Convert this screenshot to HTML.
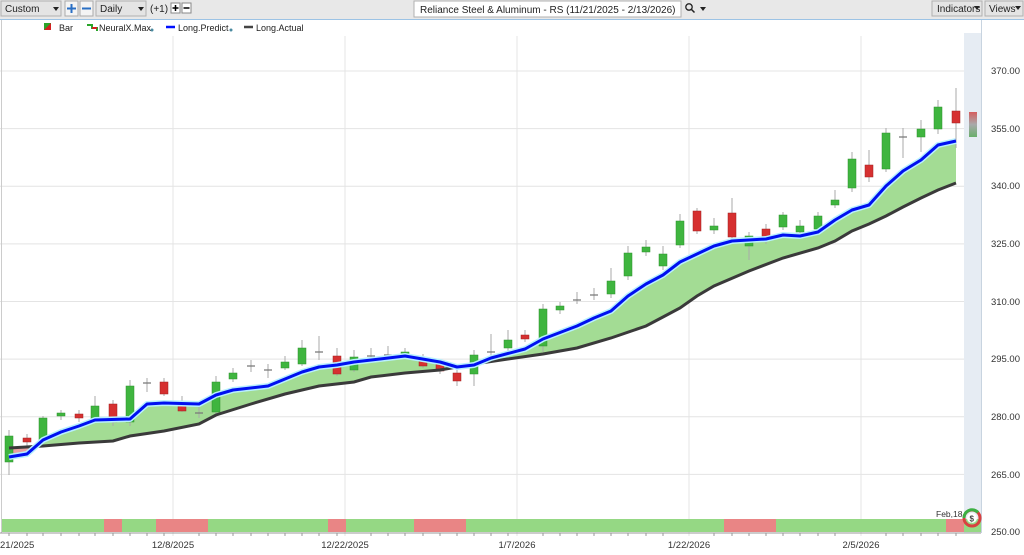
<!DOCTYPE html>
<html><head><meta charset="utf-8"><style>
body{margin:0;width:1024px;height:555px;overflow:hidden;background:#fff;font-family:"Liberation Sans",sans-serif;}
svg{display:block}
</style></head><body>
<svg width="1024" height="555" viewBox="0 0 1024 555" xmlns="http://www.w3.org/2000/svg" font-family="Liberation Sans, sans-serif">
<defs><linearGradient id="lg" x1="0" y1="0" x2="0" y2="1"><stop offset="0" stop-color="#d03a3a"/><stop offset="0.5" stop-color="#999"/><stop offset="1" stop-color="#4aa04a"/></linearGradient></defs>
<rect x="0" y="0" width="1024" height="19" fill="#e8e8e8"/>
<line x1="0" y1="19.5" x2="1024" y2="19.5" stroke="#9cc3e5"/>
<!-- toolbar -->
<rect x="1" y="1" width="60" height="15" fill="#e4e4e4" stroke="#b0b0b0"/>
<text x="5" y="12" font-size="10" fill="#222">Custom</text><path d="M53 7h6l-3 4z" fill="#222"/>
<rect x="65" y="1" width="13" height="15" fill="#f4f4f4" stroke="#aaa"/><path d="M67 8.5h9M71.5 4v9" stroke="#2a6fc4" stroke-width="2"/>
<rect x="80" y="1" width="13" height="15" fill="#f4f4f4" stroke="#aaa"/><path d="M82 8.5h9" stroke="#2a6fc4" stroke-width="2"/>
<rect x="96" y="1" width="50" height="15" fill="#e4e4e4" stroke="#b0b0b0"/>
<text x="100" y="12" font-size="10" fill="#222">Daily</text><path d="M138 7h6l-3 4z" fill="#222"/>
<text x="150" y="12" font-size="10" fill="#222">(+1)</text>
<rect x="171" y="3" width="9" height="10" fill="#fff" stroke="#888"/><path d="M172.5 8h6M175.5 5v6" stroke="#000" stroke-width="1.5"/>
<rect x="182" y="3" width="9" height="10" fill="#fff" stroke="#888"/><path d="M183.5 8h6" stroke="#000" stroke-width="1.5"/>
<rect x="414" y="1" width="267" height="16" fill="#fff" stroke="#b0b0b0"/>
<text x="420" y="13" font-size="10" fill="#222">Reliance Steel &amp; Aluminum - RS (11/21/2025 - 2/13/2026)</text>
<circle cx="689" cy="7" r="3.2" fill="none" stroke="#222" stroke-width="1.3"/><path d="M691.5 9.5l3 3" stroke="#222" stroke-width="1.5"/><path d="M700 7h6l-3 4z" fill="#222"/>
<rect x="932" y="1" width="50" height="15" fill="#e4e4e4" stroke="#b0b0b0"/><text x="937" y="12" font-size="10" fill="#222">Indicators</text><path d="M974 6h6l-3 4z" fill="#222"/>
<rect x="985" y="1" width="38" height="15" fill="#e4e4e4" stroke="#b0b0b0"/><text x="989" y="12" font-size="10" fill="#222">Views</text><path d="M1015 6h6l-3 4z" fill="#222"/>
<!-- legend -->
<path d="M44 23h7v7h-7z" fill="#2aa52a"/><path d="M44 30l7-7v7z" fill="#d42020"/>
<text x="59" y="31" font-size="9" fill="#222">Bar</text>
<path d="M87 25h5v3h5v3" stroke="#2aa52a" stroke-width="2" fill="none"/><path d="M92 28h5" stroke="#d42020" stroke-width="2"/>
<text x="99" y="31" font-size="9" fill="#222">NeuralX.Max</text><circle cx="152" cy="30" r="1.5" fill="#4a8aa0"/>
<path d="M166 27h9" stroke="#0010ff" stroke-width="2.5"/><text x="178" y="31" font-size="9" fill="#222">Long.Predict</text><circle cx="231" cy="30" r="1.5" fill="#4a8aa0"/>
<path d="M244 27h9" stroke="#444" stroke-width="2.5"/><text x="256" y="31" font-size="9" fill="#222">Long.Actual</text>
<!-- grid -->
<g stroke="#e4e4e4" stroke-width="1">
<path d="M0 71h981M0 128.6h981M0 186.3h981M0 243.9h981M0 301.5h981M0 359.1h981M0 416.8h981M0 474.4h981"/>
<path d="M173 36v500M345 36v500M517 36v500M689 36v500M861 36v500"/>
</g>
<rect x="964" y="33" width="17" height="500" fill="#e6ecf3"/>
<line x1="981.5" y1="20" x2="981.5" y2="533" stroke="#c8d4e0"/>
<line x1="1.5" y1="20" x2="1.5" y2="533" stroke="#ccc"/>
<!-- fill -->
<path d="M9 448L43 446L79 443L113 441L130 436L164 431L199 424L216 415L251 404L285 394L319 386L354 382L371 377L405 373L440 370L474 364L508 359L543 354L577 348L611 338L646 326L663 317L680 308L697 296L714 286L749 271L783 258L818 248L835 241L852 231L869 224L886 216L903 207L921 198L938 190L956 183L956 141L938 145L921 160L903 171L886 186L869 205L852 210L835 220L818 232L800 236L783 235L766 239L732 241L714 246L697 254L680 262L663 275L646 284L628 296L611 311L594 318L577 326L543 339L525 349L491 358L474 365L457 367L440 362L405 356L354 362L337 365L319 367L302 372L285 379L268 386L233 390L216 395L199 404L164 403L147 404L130 419L95 420L79 426L61 432L43 440L36 445Z" fill="#a3dc94"/>
<path d="M9 448L36 445L27 454L9 457Z" fill="#e8a0a0"/>
<!-- candles -->
<g id="c" stroke="#999" stroke-width="1"></g>
<g stroke="#aaa">
<path d="M9 430v45M27 434v12M43 416v24M61 410v10M79 410v12M95 396v26M113 400v26M130 380v46M147 378v14M164 378v18M182 396v16M199 406v12M216 376v38M233 368v14M251 360v12M268 364v14M285 356v14M302 340v26M319 336v24M337 348v28M354 350v22M371 348v14M388 346v14M405 348v10M423 354v14M440 362v12M457 370v16M474 350v36M491 334v24M508 330v22M525 330v12M543 304v48M560 302v12M577 292v12M594 288v12M611 268v30M628 246v34M646 240v16M663 246v24M680 214v34M697 208v26M714 218v16M732 198v42M749 232v28M766 224v20M783 212v18M800 220v16M818 212v20M835 190v18M852 152v40M869 150v32M886 128v44M903 128v30M921 120v32M938 100v34M956 88v60"/>
</g>
<g fill="#3fb53f" stroke="#2f8f2f" stroke-width="0.5">
<rect x="5" y="436" width="8" height="26"/><rect x="39" y="418" width="8" height="22"/><rect x="57" y="413" width="8" height="3"/><rect x="91" y="406" width="8" height="16"/><rect x="126" y="386" width="8" height="36"/><rect x="212" y="382" width="8" height="30"/><rect x="229" y="373" width="8" height="6"/><rect x="281" y="362" width="8" height="6"/><rect x="298" y="348" width="8" height="16"/><rect x="350" y="357" width="8" height="13"/><rect x="401" y="352" width="8" height="3"/><rect x="470" y="355" width="8" height="19"/><rect x="504" y="340" width="8" height="8"/><rect x="539" y="309" width="8" height="37"/><rect x="556" y="306" width="8" height="4"/><rect x="607" y="281" width="8" height="13"/><rect x="624" y="253" width="8" height="23"/><rect x="642" y="247" width="8" height="5"/><rect x="659" y="254" width="8" height="12"/><rect x="676" y="221" width="8" height="24"/><rect x="710" y="226" width="8" height="4"/><rect x="745" y="236" width="8" height="10"/><rect x="779" y="215" width="8" height="12"/><rect x="796" y="226" width="8" height="6"/><rect x="814" y="216" width="8" height="13"/><rect x="831" y="200" width="8" height="5"/><rect x="848" y="159" width="8" height="29"/><rect x="882" y="133" width="8" height="36"/><rect x="917" y="129" width="8" height="8"/><rect x="934" y="107" width="8" height="22"/>
</g>
<g fill="#d63030" stroke="#a02020" stroke-width="0.5">
<rect x="23" y="438" width="8" height="4"/><rect x="75" y="414" width="8" height="4"/><rect x="109" y="404" width="8" height="18"/><rect x="160" y="382" width="8" height="12"/><rect x="178" y="402" width="8" height="9"/><rect x="333" y="356" width="8" height="18"/><rect x="419" y="358" width="8" height="8"/><rect x="436" y="364" width="8" height="7"/><rect x="453" y="373" width="8" height="8"/><rect x="521" y="335" width="8" height="4"/><rect x="693" y="211" width="8" height="20"/><rect x="728" y="213" width="8" height="24"/><rect x="762" y="229" width="8" height="11"/><rect x="865" y="165" width="8" height="12"/><rect x="952" y="111" width="8" height="12"/>
</g>
<g stroke="#777" stroke-width="1.2"><path d="M143 383h8M195 413h8M247 366h8M264 370h8M315 352h8M367 356h8M384 355h8M487 352h8M573 300h8M590 295h8M899 137h8"/></g>
<rect x="969" y="112" width="8" height="25" fill="url(#lg)" opacity="0.8"/>
<!-- lines -->
<polyline points="9,448 43,446 79,443 113,441 130,436 164,431 199,424 216,415 251,404 285,394 319,386 354,382 371,377 405,373 440,370 474,364 508,359 543,354 577,348 611,338 646,326 663,317 680,308 697,296 714,286 749,271 783,258 818,248 835,241 852,231 869,224 886,216 903,207 921,198 938,190 956,183" fill="none" stroke="#3a3a3a" stroke-width="3"/>
<polyline points="9,457 27,454 43,440 61,432 79,426 95,420 130,419 147,404 164,403 199,404 216,395 233,390 268,386 285,379 302,372 319,367 337,365 354,362 405,356 440,362 457,367 474,365 491,358 525,349 543,339 577,326 594,318 611,311 628,296 646,284 663,275 680,262 697,254 714,246 732,241 766,239 783,235 800,236 818,232 835,220 852,210 869,205 886,186 903,171 921,160 938,145 956,141" fill="none" stroke="#b8f0ff" stroke-width="6" stroke-linejoin="round"/>
<polyline points="9,457 27,454 43,440 61,432 79,426 95,420 130,419 147,404 164,403 199,404 216,395 233,390 268,386 285,379 302,372 319,367 337,365 354,362 405,356 440,362 457,367 474,365 491,358 525,349 543,339 577,326 594,318 611,311 628,296 646,284 663,275 680,262 697,254 714,246 732,241 766,239 783,235 800,236 818,232 835,220 852,210 869,205 886,186 903,171 921,160 938,145 956,141" fill="none" stroke="#0010f0" stroke-width="3" stroke-linejoin="round"/>
<!-- band -->
<g>
<rect x="2" y="519" width="979" height="13" fill="#95d884"/>
<g fill="#e98585"><rect x="104" y="519" width="18" height="13"/><rect x="156" y="519" width="52" height="13"/><rect x="328" y="519" width="18" height="13"/><rect x="414" y="519" width="52" height="13"/><rect x="724" y="519" width="52" height="13"/><rect x="946" y="519" width="18" height="13"/></g>
</g>
<text x="936" y="517" font-size="8.5" fill="#333">Feb,18</text>
<circle cx="972" cy="518" r="8" fill="none" stroke="#d84040" stroke-width="3"/>
<path d="M964 518a8 8 0 0 1 14-5.5" fill="none" stroke="#3cb043" stroke-width="3"/>
<circle cx="972" cy="518" r="5" fill="#fff"/><text x="969.5" y="521.5" font-size="8" font-weight="bold" fill="#444">$</text>
<g stroke="#999"><path d="M0 533h981"/><path d="M9 533v3M27 533v3M43 533v3M61 533v3M79 533v3M95 533v3M113 533v3M130 533v3M147 533v3M164 533v3M199 533v3M216 533v3M233 533v3M251 533v3M268 533v3M285 533v3M302 533v3M319 533v3M337 533v3M371 533v3M388 533v3M405 533v3M423 533v3M440 533v3M457 533v3M474 533v3M491 533v3M508 533v3M543 533v3M560 533v3M577 533v3M594 533v3M611 533v3M628 533v3M646 533v3M663 533v3M714 533v3M732 533v3M749 533v3M766 533v3M783 533v3M800 533v3M818 533v3M835 533v3M886 533v3M903 533v3M921 533v3M938 533v3M956 533v3"/></g>
<g font-size="9.5" fill="#333">
<text x="0" y="548">21/2025</text>
<text x="173" y="548" text-anchor="middle">12/8/2025</text>
<text x="345" y="548" text-anchor="middle">12/22/2025</text>
<text x="517" y="548" text-anchor="middle">1/7/2026</text>
<text x="689" y="548" text-anchor="middle">1/22/2026</text>
<text x="861" y="548" text-anchor="middle">2/5/2026</text>
</g>
<g font-size="9.5" fill="#333" text-anchor="end">
<text x="1020" y="74">370.00</text><text x="1020" y="132">355.00</text><text x="1020" y="189">340.00</text><text x="1020" y="247">325.00</text><text x="1020" y="305">310.00</text><text x="1020" y="362">295.00</text><text x="1020" y="420">280.00</text><text x="1020" y="478">265.00</text><text x="1020" y="535">250.00</text>
</g>
</svg>
</body></html>
